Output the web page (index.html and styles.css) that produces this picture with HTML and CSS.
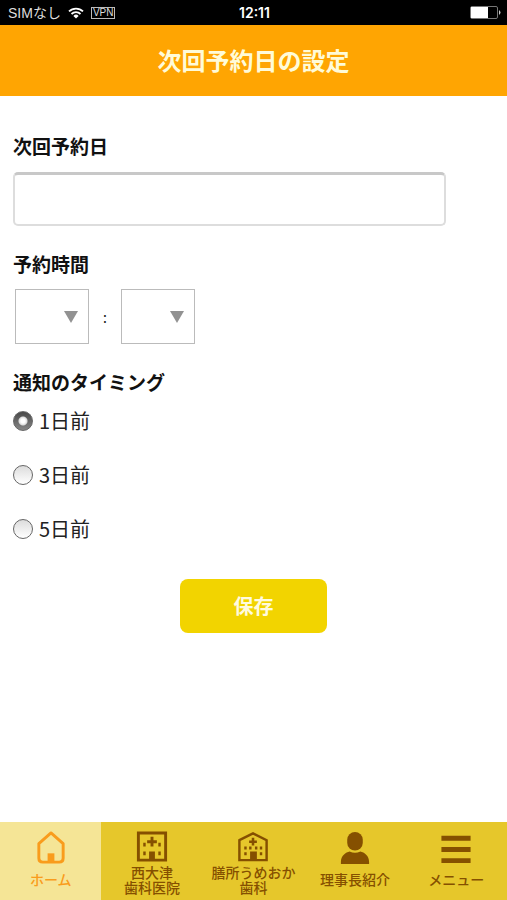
FILE: index.html
```html
<!DOCTYPE html>
<html lang="ja">
<head>
<meta charset="utf-8">
<meta name="viewport" content="width=device-width, initial-scale=1">
<title>次回予約日の設定</title>
<link rel="stylesheet" href="styles.css">
</head>
<body>
<div class="status">
  <div class="status-left">
    <span>SIMなし</span>
    <svg class="wifi" viewBox="0 0 16 12" aria-hidden="true"><path d="M1 4.4a10 10 0 0 1 14 0M3.5 7a6.4 6.4 0 0 1 9 0" fill="none" stroke="currentColor" stroke-width="1.8"/><path d="M5.4 8.9a3.7 3.7 0 0 1 5.2 0L8 11.6z" fill="currentColor"/></svg>
    <span class="vpn">VPN</span>
  </div>
  <span class="clock">12:11</span>
  <svg class="battery" viewBox="0 0 31 13" aria-hidden="true"><rect x=".5" y=".5" width="27" height="12" rx="1.5" fill="none" stroke="#777"/><path d="M1 1h17v11H1z" fill="#fff"/><path d="M29 4q3 2.500 0 5z" fill="#ccc"/></svg>
</div>
<header class="header"><h1>次回予約日の設定</h1></header>
<main class="main">
  <form class="form">
    <label class="label" for="date">次回予約日</label>
    <input class="date" id="date" type="text">
    <fieldset class="group">
      <legend class="label">予約時間</legend>
      <div class="time">
        <span class="picker"><select aria-label="時"><option></option></select></span>
        <span class="colon">:</span>
        <span class="picker"><select aria-label="分"><option></option></select></span>
      </div>
    </fieldset>
    <fieldset class="group">
      <legend class="label">通知のタイミング</legend>
      <div class="choices">
        <label class="choice"><input type="radio" name="timing" checked>1日前</label>
        <label class="choice"><input type="radio" name="timing">3日前</label>
        <label class="choice"><input type="radio" name="timing">5日前</label>
      </div>
    </fieldset>
    <button class="save" type="button">保存</button>
  </form>
</main>
<nav class="tabs">
  <a class="tab active" href="#home">
    <svg viewBox="0 0 36 36" aria-hidden="true"><path d="M5.5 14 18 3l12.500 11v15q0 4-4 4h-17q-4 0-4-4z" fill="none" stroke="currentColor" stroke-width="3" stroke-linejoin="round"/><path d="M14.500 24h7v9h-7z" fill="currentColor"/></svg>
    <span class="tab-text single">ホーム</span>
  </a>
  <a class="tab" href="#nishiotsu">
    <svg viewBox="0 0 36 36" aria-hidden="true"><path d="M4 3h28v28H4z" fill="none" stroke="currentColor" stroke-width="3"/><path d="M16.500 7h3v3.500H23v3h-3.500V17h-3v-3.500H13v-3h3.500zM15 22h6v9h-6zM9 13h2.500v4H9zM24.500 13H27v4h-2.500zM9 22h2.500v4H9zM24.500 22H27v4h-2.500z" fill="currentColor"/></svg>
    <span class="tab-text">西大津<br>歯科医院</span>
  </a>
  <a class="tab" href="#zeze">
    <svg viewBox="0 0 36 36" aria-hidden="true"><path d="M4 10.500 18 3.500l14 7V31H4z" fill="none" stroke="currentColor" stroke-width="2.500"/><path d="M16.700 8h2.600v2.700H22v2.600h-2.700V16h-2.600v-2.700H14v-2.600h2.700zM15 22h7v9h-7zM9 17h2.500v3H9zM14 17h2.500v3H14zM20 17h2.500v3H20zM25 17h2.500v3H25zM9 23h2.500v3H9zM25 23h2.500v3H25z" fill="currentColor"/></svg>
    <span class="tab-text">膳所うめおか<br>歯科</span>
  </a>
  <a class="tab" href="#director">
    <svg viewBox="0 0 36 36" aria-hidden="true"><rect x="10" y="2" width="16" height="19" rx="8" fill="currentColor"/><path d="M3.500 35v-2c0-7 5-10 9-11q5.500 3 11 0c4 1 9 4 9 11v2z" fill="currentColor"/></svg>
    <span class="tab-text single">理事長紹介</span>
  </a>
  <a class="tab" href="#menu">
    <svg viewBox="0 0 36 36" aria-hidden="true"><path d="M3 6h30v5H3zM3 17.500h30v5H3zM3 29h30v5H3z" fill="currentColor"/></svg>
    <span class="tab-text single">メニュー</span>
  </a>
</nav>
</body>
</html>
```
FILE: styles.css
```css
* { box-sizing: border-box; }

body {
  margin: 0;
  min-height: 100vh;
  display: flex;
  flex-direction: column;
  background: #fff;
  color: #111;
  font-family: "Noto Sans CJK JP", sans-serif;
  font-size: 20px;
  line-height: 24px;
}

.status {
  display: grid;
  grid-template-columns: 1fr auto 1fr;
  align-items: center;
  height: 25px;
  padding: 0 6px 0 8px;
  background: #000;
  color: #ddd;
  font-family: "Liberation Sans", "Noto Sans CJK JP", sans-serif;
  font-size: 14px;
}

.status-left {
  display: flex;
  align-items: center;
  gap: 7px;
}

.wifi { width: 16px; height: 12px; color: #fff; }

.vpn {
  border: 1px solid #bbb;
  padding: 0 1px;
  font-size: 10px;
  line-height: 10px;
}

.clock {
  color: #fff;
  font-family: Inter, sans-serif;
  font-weight: 600;
}

.battery { width: 31px; height: 13px; justify-self: end; }

.header {
  display: flex;
  align-items: center;
  justify-content: center;
  height: 71px;
  background: #ffa502;
}

.header h1 {
  margin: 0;
  color: #fffbd8;
  font-size: 24px;
  font-weight: 700;
  line-height: 32px;
  padding-bottom: 2px;
}

.main { flex: 1; padding: 38px 13px 24px; }

.form { display: flex; flex-direction: column; }

.label { padding: 0; font-size: 19px; font-weight: 700; }

.date {
  width: 90%;
  height: 54px;
  margin-top: 14px;
  padding: 0 12px;
  border: 2px solid #ddd;
  border-top: 3px solid #c8c8c8;
  border-radius: 5px;
  background: #fff;
  font: inherit;
}

.group {
  min-width: 0;
  margin: 26px 0 0;
  padding: 0;
  border: 0;
}

.time {
  display: flex;
  align-items: center;
  padding: 13px 2px 0;
}

.picker {
  display: grid;
  align-items: center;
  width: 74px;
  height: 55px;
  border: 1px solid #bbb;
}

.picker::after {
  content: "";
  grid-area: 1 / 1;
  justify-self: end;
  margin-right: 10px;
  border: 7px solid transparent;
  border-top: 12px solid #929292;
  border-bottom: 0;
  pointer-events: none;
}

.picker select {
  grid-area: 1 / 1;
  width: 100%;
  height: 100%;
  padding: 0 28px 0 8px;
  border: 0;
  background: transparent;
  appearance: none;
  font: inherit;
}

.colon {
  width: 32px;
  text-align: center;
  font-size: 14px;
}

.choices {
  display: flex;
  flex-direction: column;
  align-items: flex-start;
  gap: 30px;
  padding-top: 15px;
}

.choice { display: flex; align-items: center; gap: 6px; color: #222; }

.choice input {
  width: 20px;
  height: 20px;
  margin: 0;
  border: 1px solid #666;
  border-radius: 50%;
  background: linear-gradient(#dcdcdc, #fff);
  appearance: none;
}

.choice input:checked {
  background: radial-gradient(circle, #fff 0 2px, #ddd 4px, transparent 5px), linear-gradient(#484848, #888);
}

.save {
  align-self: center;
  width: 147px;
  height: 54px;
  margin-top: 38px;
  border: 0;
  border-radius: 8px;
  background: #f2d400;
  color: #fffbe0;
  font: inherit;
  font-weight: 700;
}

.tabs {
  display: grid;
  grid-template-columns: repeat(5, 1fr);
  height: 78px;
  background: #e6c72b;
}

.tab {
  display: flex;
  flex-direction: column;
  align-items: center;
  padding-top: 8px;
  color: #855000;
  text-decoration: none;
  white-space: nowrap;
}

.tab.active { background: #f5e596; color: #f99c1c; }

.tab svg { flex: none; width: 36px; height: 35px; }

.tab-text {
  font-size: 14px;
  font-weight: 500;
  line-height: 15px;
  text-align: center;
}

.single { padding-top: 7px; }
```
